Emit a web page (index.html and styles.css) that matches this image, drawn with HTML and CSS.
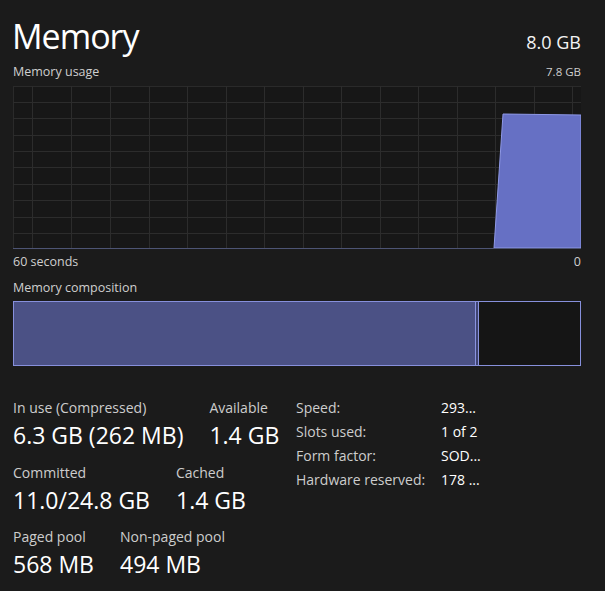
FILE: index.html
```html
<!DOCTYPE html>
<html>
<head>
<meta charset="utf-8">
<link rel="stylesheet" href="styles.css">
</head>
<body>
<div class="page">
  <div class="header">
    <div class="title">Memory</div>
    <div class="total">8.0 GB</div>
  </div>
  <div class="subrow sub-top">
    <span>Memory usage</span>
    <span class="small">7.8 GB</span>
  </div>
  <div class="chart">
    <svg viewBox="0 0 568 163" preserveAspectRatio="none" class="chart-svg">
      <g stroke="#2c2c2c" stroke-width="1">
        <line x1="0" y1="16.5" x2="568" y2="16.5"/>
        <line x1="0" y1="32.5" x2="568" y2="32.5"/>
        <line x1="0" y1="49.5" x2="568" y2="49.5"/>
        <line x1="0" y1="65.5" x2="568" y2="65.5"/>
        <line x1="0" y1="81.5" x2="568" y2="81.5"/>
        <line x1="0" y1="98.5" x2="568" y2="98.5"/>
        <line x1="0" y1="114.5" x2="568" y2="114.5"/>
        <line x1="0" y1="131.5" x2="568" y2="131.5"/>
        <line x1="0" y1="147.5" x2="568" y2="147.5"/>
        <line x1="19.5" y1="0" x2="19.5" y2="163"/>
        <line x1="58.5" y1="0" x2="58.5" y2="163"/>
        <line x1="97.5" y1="0" x2="97.5" y2="163"/>
        <line x1="136.5" y1="0" x2="136.5" y2="163"/>
        <line x1="174.5" y1="0" x2="174.5" y2="163"/>
        <line x1="213.5" y1="0" x2="213.5" y2="163"/>
        <line x1="251.5" y1="0" x2="251.5" y2="163"/>
        <line x1="290.5" y1="0" x2="290.5" y2="163"/>
        <line x1="328.5" y1="0" x2="328.5" y2="163"/>
        <line x1="367.5" y1="0" x2="367.5" y2="163"/>
        <line x1="405.5" y1="0" x2="405.5" y2="163"/>
        <line x1="444.5" y1="0" x2="444.5" y2="163"/>
        <line x1="482.5" y1="0" x2="482.5" y2="163"/>
        <line x1="521.5" y1="0" x2="521.5" y2="163"/>
        <line x1="559.5" y1="0" x2="559.5" y2="163"/>
      </g>
      <polygon points="481,162 490,28 568,29 568,162" fill="#6670c4" stroke="#8e98e6" stroke-width="1"/>
      <line x1="0" y1="162.5" x2="568" y2="162.5" stroke="#4d5474" stroke-width="1"/>
    </svg>
  </div>
  <div class="subrow sub-axis">
    <span>60 seconds</span>
    <span>0</span>
  </div>
  <div class="subrow sub-comp">
    <span>Memory composition</span>
  </div>
  <div class="comp">
    <div class="seg seg-inuse"></div>
    <div class="seg seg-mod"></div>
    <div class="seg seg-free"></div>
  </div>
  <div class="stats">
    <div class="stats-left">
      <div class="stat-row">
        <div class="stat"><div class="label">In use (Compressed)</div><div class="value">6.3 GB (262 MB)</div></div>
        <div class="stat"><div class="label">Available</div><div class="value">1.4 GB</div></div>
      </div>
      <div class="stat-row">
        <div class="stat"><div class="label">Committed</div><div class="value">11.0/24.8 GB</div></div>
        <div class="stat"><div class="label">Cached</div><div class="value">1.4 GB</div></div>
      </div>
      <div class="stat-row">
        <div class="stat"><div class="label">Paged pool</div><div class="value">568 MB</div></div>
        <div class="stat"><div class="label">Non-paged pool</div><div class="value">494 MB</div></div>
      </div>
    </div>
    <div class="stats-right">
      <div class="kv"><span class="k">Speed:</span><span class="v">293...</span></div>
      <div class="kv"><span class="k">Slots used:</span><span class="v">1 of 2</span></div>
      <div class="kv"><span class="k">Form factor:</span><span class="v">SOD...</span></div>
      <div class="kv"><span class="k">Hardware reserved:</span><span class="v">178 ...</span></div>
    </div>
  </div>
</div>
</body>
</html>
```

FILE: styles.css
```css
html, body {
  margin: 0;
  padding: 0;
  background: #1b1b1b;
}
body {
  width: 605px;
  height: 591px;
  overflow: hidden;
  font-family: "Open Sans", "Noto Sans", sans-serif;
  color: #ffffff;
}
.page {
  padding: 0 24px 0 13px;
}
.header {
  display: flex;
  justify-content: space-between;
  align-items: baseline;
  padding-top: 16px;
}
.title {
  font-size: 34px;
  line-height: 40px;
  letter-spacing: -1px;
  margin-left: -1px;
}
.total {
  font-size: 18px;
  line-height: 24px;
  color: #f4f4f4;
}
.subrow {
  display: flex;
  justify-content: space-between;
  align-items: baseline;
  font-size: 12.5px;
  line-height: 16px;
  color: #cfcfcf;
}
.sub-top {
  margin-top: 8px;
}
.small {
  font-size: 11.5px;
}
.chart {
  margin-top: 6px;
  height: 163px;
  background: #171717;
  box-shadow: inset 1px 1px 0 #2a2a2a;
}
.chart-svg {
  display: block;
  width: 568px;
  height: 163px;
}
.sub-axis {
  margin-top: 5px;
}
.sub-comp {
  margin-top: 10px;
}
.comp {
  margin-top: 5px;
  height: 63px;
  border: 1px solid #8790dc;
  display: flex;
  background: #151515;
}
.seg-inuse {
  width: 461px;
  background: #4b5185;
  border-right: 1px solid #8a93e0;
}
.seg-mod {
  width: 2px;
  background: #3e4370;
  border-right: 1px solid #8a93e0;
}
.seg-free {
  flex: 1;
}
.stats {
  margin-top: 32px;
  display: flex;
}
.stats-left {
  width: 283px;
  display: flex;
  flex-direction: column;
  gap: 13.5px;
}
.stat-row {
  display: flex;
  gap: 26px;
}
.label {
  font-size: 14px;
  line-height: 20px;
  color: #cdcdcd;
}
.value {
  margin-top: 3px;
  font-size: 23px;
  line-height: 28px;
  color: #ffffff;
}
.stats-right {
  display: flex;
  flex-direction: column;
  gap: 4px;
}
.kv {
  display: flex;
  font-size: 14px;
  line-height: 20px;
}
.k {
  width: 145px;
  color: #cdcdcd;
}
.v {
  color: #ffffff;
}
```
